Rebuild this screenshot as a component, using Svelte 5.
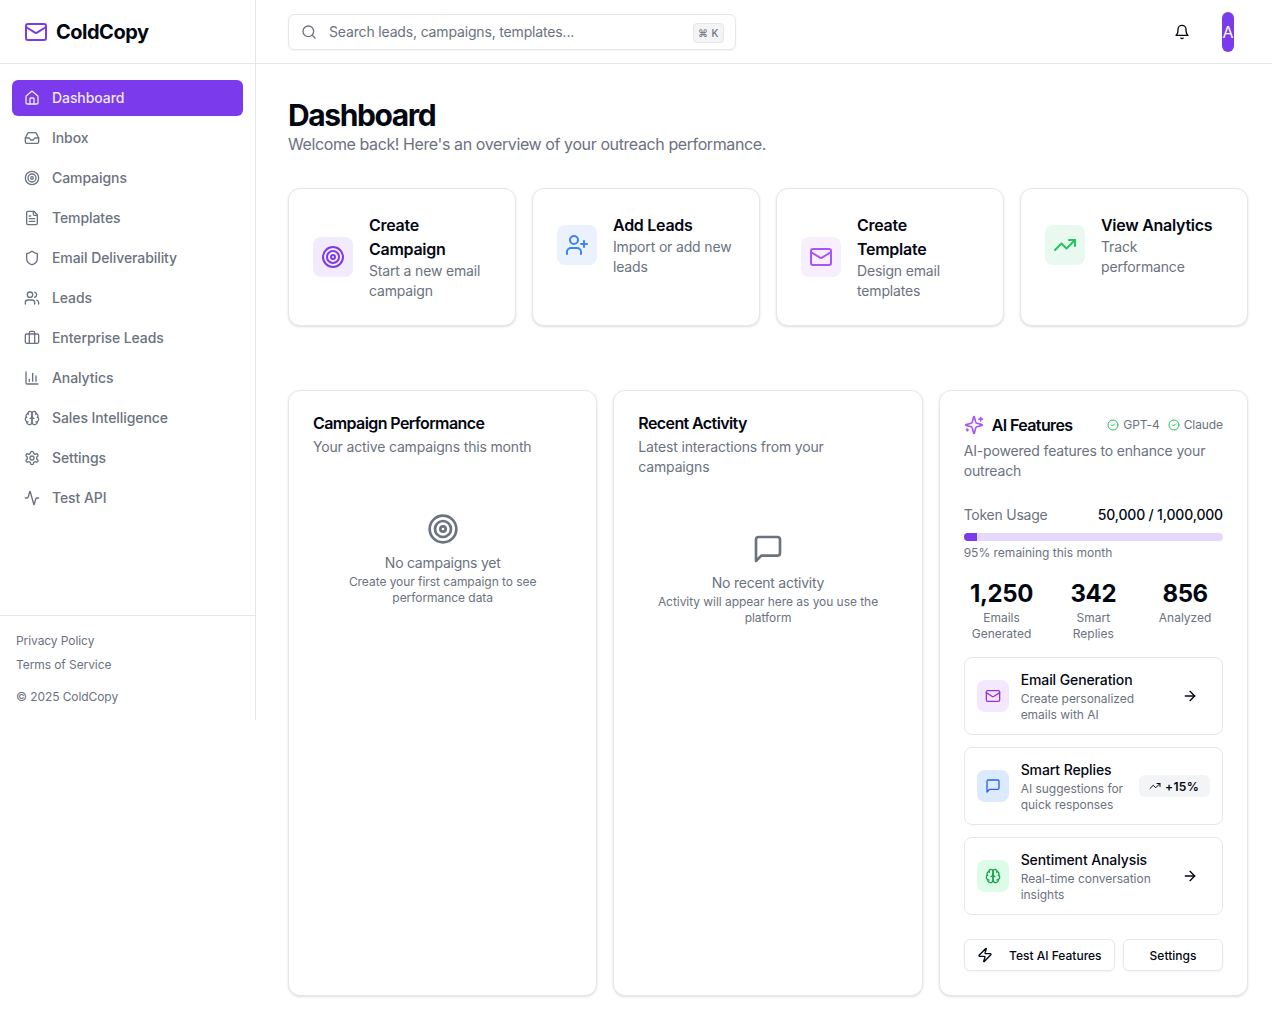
<script>
  const I = {
    mail: '<rect width="20" height="16" x="2" y="4" rx="2"/><path d="m22 7-8.97 5.7a1.94 1.94 0 0 1-2.06 0L2 7"/>',
    home: '<path d="M15 21v-8a1 1 0 0 0-1-1h-4a1 1 0 0 0-1 1v8"/><path d="M3 10a2 2 0 0 1 .709-1.528l7-5.999a2 2 0 0 1 2.582 0l7 5.999A2 2 0 0 1 21 10v9a2 2 0 0 1-2 2H5a2 2 0 0 1-2-2z"/>',
    inbox: '<polyline points="22 12 16 12 14 15 10 15 8 12 2 12"/><path d="M5.45 5.11 2 12v6a2 2 0 0 0 2 2h16a2 2 0 0 0 2-2v-6l-3.45-6.89A2 2 0 0 0 16.76 4H7.24a2 2 0 0 0-1.79 1.11z"/>',
    target: '<circle cx="12" cy="12" r="10"/><circle cx="12" cy="12" r="6"/><circle cx="12" cy="12" r="2"/>',
    file: '<path d="M15 2H6a2 2 0 0 0-2 2v16a2 2 0 0 0 2 2h12a2 2 0 0 0 2-2V7Z"/><path d="M14 2v4a2 2 0 0 0 2 2h4"/><path d="M10 9H8"/><path d="M16 13H8"/><path d="M16 17H8"/>',
    shield: '<path d="M20 13c0 5-3.5 7.5-7.66 8.95a1 1 0 0 1-.67-.01C7.5 20.5 4 18 4 13V6a1 1 0 0 1 1-1c2 0 4.5-1.2 6.24-2.72a1.17 1.17 0 0 1 1.52 0C14.51 3.81 17 5 19 5a1 1 0 0 1 1 1z"/>',
    users: '<path d="M16 21v-2a4 4 0 0 0-4-4H6a4 4 0 0 0-4 4v2"/><circle cx="9" cy="7" r="4"/><path d="M22 21v-2a4 4 0 0 0-3-3.87"/><path d="M16 3.13a4 4 0 0 1 0 7.75"/>',
    briefcase: '<path d="M16 20V4a2 2 0 0 0-2-2h-4a2 2 0 0 0-2 2v16"/><rect width="20" height="14" x="2" y="6" rx="2"/>',
    chart: '<path d="M3 3v16a2 2 0 0 0 2 2h16"/><path d="M18 17V9"/><path d="M13 17V5"/><path d="M8 17v-3"/>',
    brain: '<path d="M12 5a3 3 0 1 0-5.997.125 4 4 0 0 0-2.526 5.77 4 4 0 0 0 .556 6.588A4 4 0 1 0 12 18Z"/><path d="M12 5a3 3 0 1 1 5.997.125 4 4 0 0 1 2.526 5.77 4 4 0 0 1-.556 6.588A4 4 0 1 1 12 18Z"/><path d="M15 13a4.5 4.5 0 0 1-3-4 4.5 4.5 0 0 1-3 4"/><path d="M17.599 6.5a3 3 0 0 0 .399-1.375"/><path d="M6.003 5.125A3 3 0 0 0 6.401 6.5"/><path d="M3.477 10.896a4 4 0 0 1 .585-.396"/><path d="M19.938 10.5a4 4 0 0 1 .585.396"/><path d="M6 18a4 4 0 0 1-1.967-.516"/><path d="M19.967 17.484A4 4 0 0 1 18 18"/>',
    settings: '<path d="M12.22 2h-.44a2 2 0 0 0-2 2v.18a2 2 0 0 1-1 1.73l-.43.25a2 2 0 0 1-2 0l-.15-.08a2 2 0 0 0-2.73.73l-.22.38a2 2 0 0 0 .73 2.73l.15.1a2 2 0 0 1 1 1.72v.51a2 2 0 0 1-1 1.74l-.15.09a2 2 0 0 0-.73 2.73l.22.38a2 2 0 0 0 2.73.73l.15-.08a2 2 0 0 1 2 0l.43.25a2 2 0 0 1 1 1.73V20a2 2 0 0 0 2 2h.44a2 2 0 0 0 2-2v-.18a2 2 0 0 1 1-1.73l.43-.25a2 2 0 0 1 2 0l.15.08a2 2 0 0 0 2.73-.73l.22-.39a2 2 0 0 0-.73-2.73l-.15-.08a2 2 0 0 1-1-1.74v-.5a2 2 0 0 1 1-1.74l.15-.09a2 2 0 0 0 .73-2.73l-.22-.38a2 2 0 0 0-2.73-.73l-.15.08a2 2 0 0 1-2 0l-.43-.25a2 2 0 0 1-1-1.73V4a2 2 0 0 0-2-2z"/><circle cx="12" cy="12" r="3"/>',
    activity: '<path d="M22 12h-2.48a2 2 0 0 0-1.93 1.46l-2.35 8.36a.25.25 0 0 1-.48 0L9.24 2.18a.25.25 0 0 0-.48 0l-2.35 8.36A2 2 0 0 1 4.49 12H2"/>',
    search: '<circle cx="11" cy="11" r="8"/><path d="m21 21-4.3-4.3"/>',
    bell: '<path d="M6 8a6 6 0 0 1 12 0c0 7 3 9 3 9H3s3-2 3-9"/><path d="M10.3 21a1.94 1.94 0 0 0 3.4 0"/>',
    userplus: '<path d="M16 21v-2a4 4 0 0 0-4-4H6a4 4 0 0 0-4 4v2"/><circle cx="9" cy="7" r="4"/><line x1="19" x2="19" y1="8" y2="14"/><line x1="22" x2="16" y1="11" y2="11"/>',
    trend: '<polyline points="22 7 13.5 15.5 8.5 10.5 2 17"/><polyline points="16 7 22 7 22 13"/>',
    sparkles: '<path d="M9.937 15.5A2 2 0 0 0 8.5 14.063l-6.135-1.582a.5.5 0 0 1 0-.962L8.5 9.936A2 2 0 0 0 9.937 8.5l1.582-6.135a.5.5 0 0 1 .963 0L14.063 8.5A2 2 0 0 0 15.5 9.937l6.135 1.581a.5.5 0 0 1 0 .964L15.5 14.063a2 2 0 0 0-1.437 1.437l-1.582 6.135a.5.5 0 0 1-.963 0z"/><path d="M20 3v4"/><path d="M22 5h-4"/><path d="M4 17v2"/><path d="M5 18H3"/>',
    check: '<circle cx="12" cy="12" r="10"/><path d="m9 12 2 2 4-4"/>',
    message: '<path d="M21 15a2 2 0 0 1-2 2H7l-4 4V5a2 2 0 0 1 2-2h14a2 2 0 0 1 2 2z"/>',
    arrow: '<path d="M5 12h14"/><path d="m12 5 7 7-7 7"/>',
    zap: '<path d="M4 14a1 1 0 0 1-.78-1.63l9.9-10.2a.5.5 0 0 1 .86.46l-1.92 6.02A1 1 0 0 0 13 10h7a1 1 0 0 1 .78 1.63l-9.9 10.2a.5.5 0 0 1-.86-.46l1.92-6.02A1 1 0 0 0 11 14z"/>'
  };

  const nav = [
    ['home', 'Dashboard'], ['inbox', 'Inbox'], ['target', 'Campaigns'], ['file', 'Templates'],
    ['shield', 'Email Deliverability'], ['users', 'Leads'], ['briefcase', 'Enterprise Leads'],
    ['chart', 'Analytics'], ['brain', 'Sales Intelligence'], ['settings', 'Settings'], ['activity', 'Test API']
  ];
  const actions = [
    { icon: 'target', tone: 'violet', title: 'Create Campaign', text: 'Start a new email campaign' },
    { icon: 'userplus', tone: 'blue', title: 'Add Leads', text: 'Import or add new leads' },
    { icon: 'mail', tone: 'purple', title: 'Create Template', text: 'Design email templates' },
    { icon: 'trend', tone: 'green', title: 'View Analytics', text: 'Track performance' }
  ];
  const stats = [['1,250', 'Emails Generated'], ['342', 'Smart Replies'], ['856', 'Analyzed']];
  const features = [
    { icon: 'mail', tone: 'purple', title: 'Email Generation', text: 'Create personalized emails with AI' },
    { icon: 'message', tone: 'blue', title: 'Smart Replies', text: 'AI suggestions for quick responses', badge: '+15%' },
    { icon: 'brain', tone: 'green', title: 'Sentiment Analysis', text: 'Real-time conversation insights' }
  ];
</script>

{#snippet icon(name, size)}
  <svg class="ic" width={size} height={size} viewBox="0 0 24 24" fill="none" stroke="currentColor" stroke-width="2" stroke-linecap="round" stroke-linejoin="round">{@html I[name]}</svg>
{/snippet}

<div class="app">
  <aside class="sidebar">
    <div class="brand">
      <span class="brand-icon">{@render icon('mail', 24)}</span>
      <span class="brand-name">ColdCopy</span>
    </div>
    <nav class="nav">
      {#each nav as [ic, label], i}
        <div class="nav-item" class:active={i === 0}>
          {@render icon(ic, 16)}
          <span class="nav-label">{label}</span>
        </div>
      {/each}
    </nav>
    <div class="side-foot">
      <div class="foot-link">Privacy Policy</div>
      <div class="foot-link">Terms of Service</div>
      <div class="copy">© 2025 ColdCopy</div>
    </div>
  </aside>

  <div class="column">
    <header class="topbar">
      <div class="search">
        <span class="search-icon">{@render icon('search', 16)}</span>
        <span class="placeholder">Search leads, campaigns, templates...</span>
        <span class="kbd">⌘ K</span>
      </div>
      <div class="top-actions">
        <span class="bell">{@render icon('bell', 16)}</span>
        <span class="avatar">A</span>
      </div>
    </header>

    <main class="main">
      <h1>Dashboard</h1>
      <p class="lead">Welcome back! Here's an overview of your outreach performance.</p>

      <section class="actions">
        {#each actions as a}
          <div class="card action">
            <div class="action-row">
              <div class="tile large {a.tone}">{@render icon(a.icon, 24)}</div>
              <div class="action-text">
                <div class="action-title">{a.title}</div>
                <div class="muted-14">{a.text}</div>
              </div>
            </div>
          </div>
        {/each}
      </section>

      <section class="panels">
        <div class="card panel">
          <h2>Campaign Performance</h2>
          <p class="muted-14 sub">Your active campaigns this month</p>
          <div class="empty">
            <span class="empty-icon">{@render icon('target', 32)}</span>
            <div class="empty-title">No campaigns yet</div>
            <div class="empty-text">Create your first campaign to see performance data</div>
          </div>
        </div>

        <div class="card panel">
          <h2>Recent Activity</h2>
          <p class="muted-14 sub">Latest interactions from your campaigns</p>
          <div class="empty">
            <span class="empty-icon">{@render icon('message', 32)}</span>
            <div class="empty-title">No recent activity</div>
            <div class="empty-text">Activity will appear here as you use the platform</div>
          </div>
        </div>

        <div class="card panel">
          <div class="ai-head">
            <span class="ai-spark">{@render icon('sparkles', 20)}</span>
            <h2>AI Features</h2>
            <div class="models">
              <span class="model">{@render icon('check', 12)}GPT-4</span>
              <span class="model">{@render icon('check', 12)}Claude</span>
            </div>
          </div>
          <p class="muted-14 sub">AI-powered features to enhance your outreach</p>

          <div class="usage">
            <div class="usage-row">
              <span class="usage-label">Token Usage</span>
              <span class="usage-value">50,000 / 1,000,000</span>
            </div>
            <div class="bar"><div class="bar-fill" style="width: 5%"></div></div>
            <div class="usage-note">95% remaining this month</div>
          </div>

          <div class="stats">
            {#each stats as [n, l]}
              <div class="stat">
                <div class="stat-num">{n}</div>
                <div class="stat-label">{l}</div>
              </div>
            {/each}
          </div>

          <div class="features">
            {#each features as f}
              <div class="feature">
                <div class="tile small {f.tone}-strong">{@render icon(f.icon, 16)}</div>
                <div class="feature-text">
                  <div class="feature-title">{f.title}</div>
                  <div class="feature-sub">{f.text}</div>
                </div>
                {#if f.badge}
                  <span class="badge">{@render icon('trend', 12)}{f.badge}</span>
                {:else}
                  <span class="go">{@render icon('arrow', 16)}</span>
                {/if}
              </div>
            {/each}
          </div>

          <div class="buttons">
            <div class="btn grow">{@render icon('zap', 16)}<span>Test AI Features</span></div>
            <div class="btn fixed">Settings</div>
          </div>
        </div>
      </section>
    </main>
  </div>
</div>

<style>
  :global(body) {
    margin: 0;
    background: #fff;
    font-family: Inter, "Liberation Sans", sans-serif;
    color: #030712;
  }
  .ic { display: block; flex: none; }
  .app { display: flex; align-items: flex-start; width: 1272px; }

  .sidebar {
    width: 256px;
    height: 720px;
    flex: none;
    box-sizing: border-box;
    border-right: 1px solid #e5e7eb;
    display: flex;
    flex-direction: column;
  }
  .brand {
    height: 64px;
    box-sizing: border-box;
    border-bottom: 1px solid #e5e7eb;
    display: flex;
    align-items: center;
    gap: 8px;
    padding: 0 24px;
  }
  .brand-icon { color: #7c3aed; }
  .brand-name { font-size: 20px; font-weight: 700; letter-spacing: -0.5px; }
  .nav { flex: 1; padding: 16px 12px; display: flex; flex-direction: column; gap: 4px; }
  .nav-item {
    height: 36px;
    border-radius: 6px;
    padding: 0 12px;
    display: flex;
    align-items: center;
    gap: 12px;
    font-size: 14px;
    font-weight: 500;
    letter-spacing: -0.08px;
    color: #6b7280;
  }
  .nav-label { margin-top: -2px; }
  .nav-item.active { background: #7c3aed; color: #ede9fe; }
  .side-foot { border-top: 1px solid #e5e7eb; padding: 17px 16px 15px; font-size: 12px; letter-spacing: -0.08px; color: #6b7280; }
  .foot-link { line-height: 16px; margin-bottom: 8px; }
  .copy { line-height: 16px; margin-top: 16px; }

  .column { flex: 1; min-width: 0; }
  .topbar {
    height: 64px;
    box-sizing: border-box;
    border-bottom: 1px solid #e5e7eb;
    padding: 0 38px 0 32px;
    display: flex;
    align-items: center;
    justify-content: space-between;
  }
  .search {
    width: 448px;
    height: 36px;
    box-sizing: border-box;
    border: 1px solid #e5e7eb;
    border-radius: 6px;
    box-shadow: 0 1px 2px rgba(0, 0, 0, 0.05);
    display: flex;
    align-items: center;
    padding: 0 11px 0 12px;
    font-size: 14px;
    letter-spacing: -0.16px;
    color: #6b7280;
  }
  .search-icon { margin-right: 12px; }
  .placeholder { flex: 1; }
  .kbd {
    height: 20px;
    box-sizing: border-box;
    padding: 0 4px;
    margin-top: 2px;
    border: 1px solid #e5e7eb;
    border-radius: 4px;
    background: #f3f4f6;
    font-size: 10px;
    font-weight: 500;
    line-height: 18px;
    letter-spacing: 0.5px;
  }
  .top-actions { display: flex; align-items: center; gap: 32px; }
  .bell { color: #030712; }
  .avatar {
    width: 12px;
    height: 40px;
    border-radius: 999px;
    background: #7c3aed;
    color: #fff;
    font-size: 16px;
    display: flex;
    align-items: center;
    justify-content: center;
    overflow: hidden;
  }

  .main { padding: 32px 24px 32px 32px; }
  h1 { margin: 0 0 -1px; padding-top: 1px; font-size: 30px; line-height: 36px; font-weight: 700; letter-spacing: -1.4px; }
  .lead { margin: 0; font-size: 16px; line-height: 24px; letter-spacing: -0.4px; color: #6b7280; }

  .card {
    box-sizing: border-box;
    border: 1px solid #e5e7eb;
    border-radius: 12px;
    background: #fff;
    box-shadow: 0 1px 3px rgba(0, 0, 0, 0.1), 0 1px 2px -1px rgba(0, 0, 0, 0.1);
  }
  .actions { display: grid; grid-template-columns: repeat(4, 1fr); gap: 16px; margin-top: 32px; }
  .action { padding: 24px; }
  .action-row { display: flex; align-items: center; gap: 16px; }
  .tile { display: flex; align-items: center; justify-content: center; flex: none; }
  .tile.large { width: 40px; height: 40px; border-radius: 8px; }
  .tile.small { width: 32px; height: 32px; border-radius: 8px; }
  .violet { background: #f2ebfd; color: #7c3aed; }
  .blue { background: #ebf2fe; color: #3b82f6; }
  .purple { background: #f7eefe; color: #a855f7; }
  .green { background: #e9f9ef; color: #22c55e; }
  .purple-strong { background: #f3e8ff; color: #9333ea; }
  .blue-strong { background: #dbeafe; color: #2563eb; }
  .green-strong { background: #dcfce7; color: #16a34a; }
  .action-title { font-size: 16px; line-height: 24px; font-weight: 600; letter-spacing: -0.27px; }
  .muted-14 { font-size: 14px; line-height: 20px; letter-spacing: -0.16px; color: #6b7280; }

  .panels { display: grid; grid-template-columns: repeat(3, 1fr); gap: 16px; margin-top: 64px; }
  .panel { padding: 24px; }
  h2 { margin: 0; font-size: 16px; line-height: 16px; font-weight: 600; letter-spacing: -0.6px; }
  .sub { margin: 6px 0 0; }
  .empty { margin-top: 56px; text-align: center; color: #6b7280; }
  .empty-icon { display: flex; justify-content: center; margin-bottom: 8px; }
  .empty-title { font-size: 14px; line-height: 20px; letter-spacing: -0.25px; }
  .empty-text { font-size: 12px; line-height: 16px; letter-spacing: -0.05px; padding-top: 1px; margin-bottom: -1px; }

  .ai-head { display: flex; align-items: center; height: 20px; gap: 8px; }
  .ai-spark { color: #a855f7; }
  .models { margin-left: auto; display: flex; gap: 8px; }
  .model { display: flex; align-items: center; gap: 4px; font-size: 12px; line-height: 16px; letter-spacing: -0.08px; color: #6b7280; }
  .model :global(svg) { color: #22c55e; }
  .usage { margin-top: 24px; }
  .usage-row { display: flex; justify-content: space-between; font-size: 14px; line-height: 20px; }
  .usage-label { color: #6b7280; letter-spacing: -0.25px; }
  .usage-value { font-weight: 500; letter-spacing: -0.17px; }
  .bar { margin-top: 8px; height: 8px; border-radius: 999px; background: #e5d8fb; overflow: hidden; }
  .bar-fill { height: 100%; background: #7c3aed; }
  .usage-note { margin-top: 4px; font-size: 12px; line-height: 16px; color: #6b7280; }
  .stats { display: grid; grid-template-columns: repeat(3, 1fr); gap: 16px; margin-top: 17px; margin-bottom: -1px; text-align: center; }
  .stat-num { font-size: 24px; line-height: 32px; font-weight: 700; letter-spacing: -0.4px; }
  .stat-label { font-size: 12px; line-height: 16px; color: #6b7280; }
  .features { margin-top: 16px; display: flex; flex-direction: column; gap: 12px; }
  .feature {
    height: 78px;
    box-sizing: border-box;
    border: 1px solid #e5e7eb;
    border-radius: 8px;
    padding: 12px;
    display: flex;
    align-items: center;
    gap: 12px;
  }
  .feature-text { flex: 1; min-width: 0; }
  .feature-title { font-size: 14px; line-height: 20px; font-weight: 500; letter-spacing: -0.1px; }
  .feature-sub { font-size: 12px; line-height: 16px; letter-spacing: -0.03px; padding-top: 1px; margin-bottom: -1px; color: #6b7280; }
  .go { width: 40px; flex: none; display: flex; justify-content: center; }
  .badge {
    flex: none;
    height: 22px;
    border-radius: 6px;
    background: #f3f4f6;
    padding: 0 11px 0 10px;
    display: flex;
    align-items: center;
    gap: 4px;
    font-size: 12px;
    font-weight: 600;
    letter-spacing: 0.3px;
  }
  .buttons { margin-top: 24px; display: flex; gap: 8px; }
  .btn {
    height: 32px;
    box-sizing: border-box;
    border: 1px solid #e5e7eb;
    border-radius: 6px;
    box-shadow: 0 1px 2px rgba(0, 0, 0, 0.05);
    display: flex;
    align-items: center;
    justify-content: center;
    gap: 16px;
    font-size: 12px;
    font-weight: 500;
  }
  .btn.grow { flex: 1; }
  .btn.fixed { width: 100px; flex: none; }
</style>
